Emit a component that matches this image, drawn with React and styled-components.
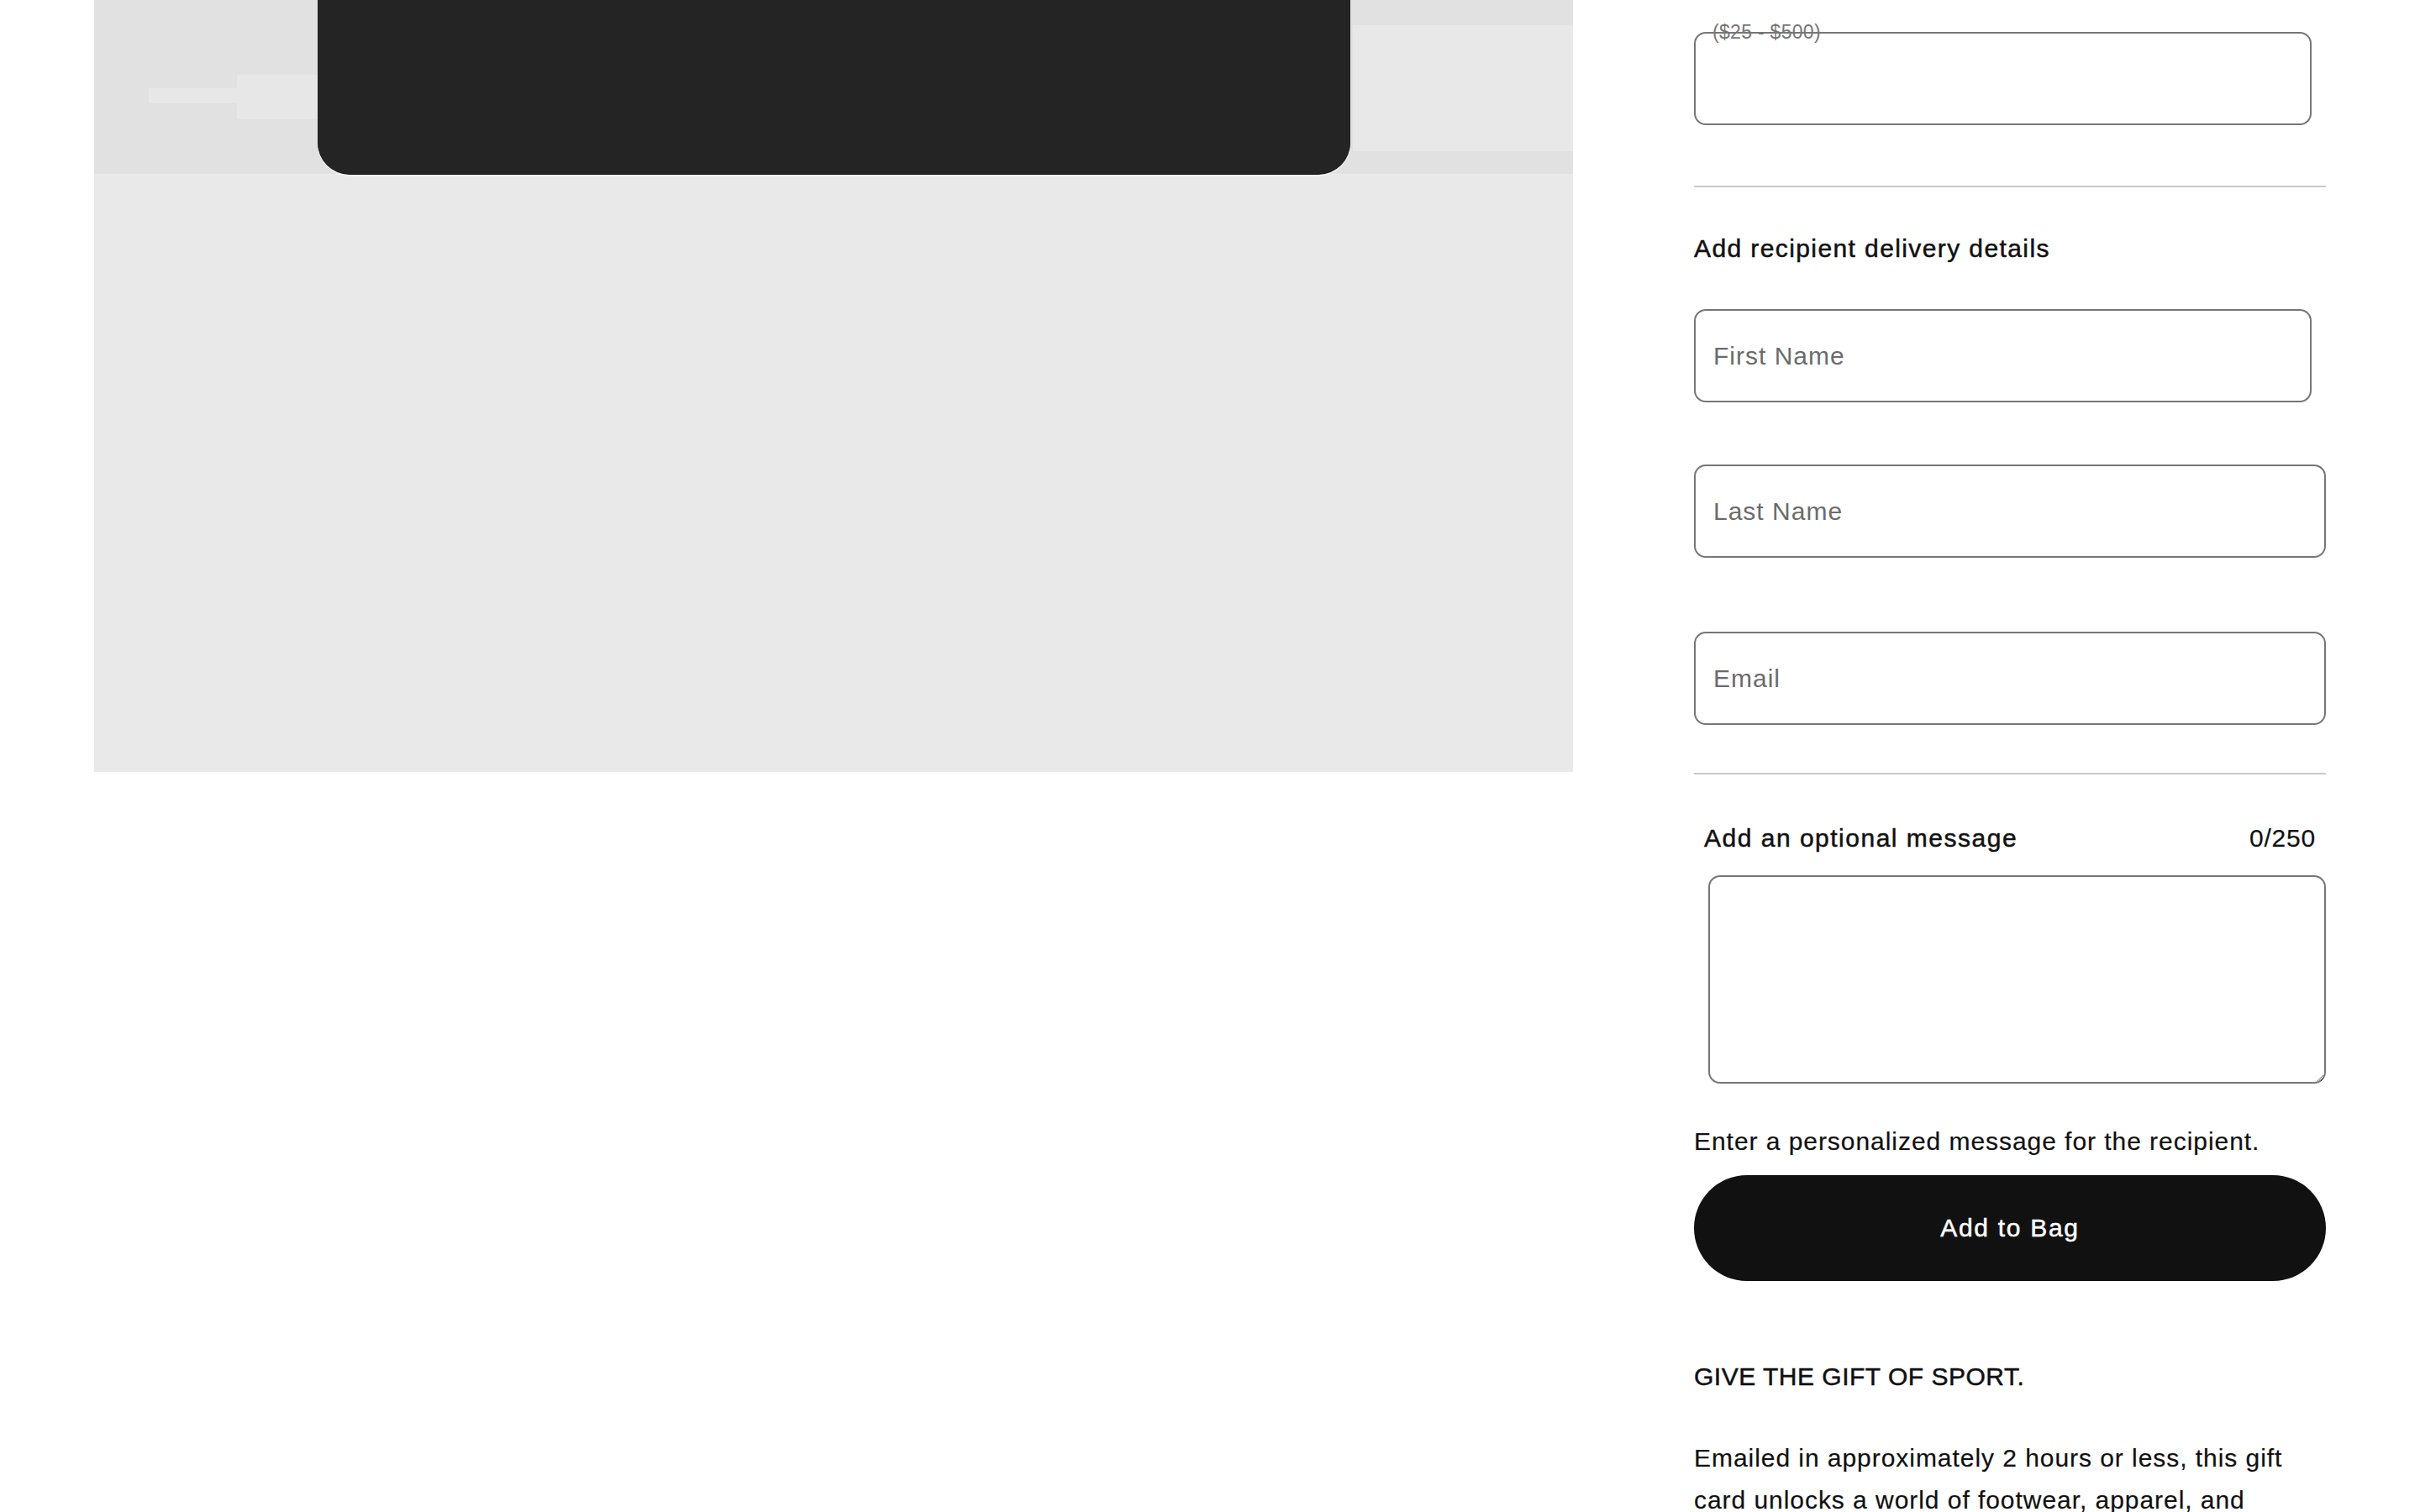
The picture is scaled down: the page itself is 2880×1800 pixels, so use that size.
import styled, { createGlobalStyle } from 'styled-components'

const GlobalStyle = createGlobalStyle`
  html, body {
    margin: 0;
    padding: 0;
    background: #fff;
  }
  body {
    font-family: 'Liberation Sans', Arial, sans-serif;
    color: #111;
  }
`

const Page = styled.div`
  display: flex;
  align-items: flex-start;
  gap: 144px;
  padding: 0 112px;
  height: 1800px;
  overflow: hidden;
`

const Media = styled.div`
  flex-shrink: 0;
  width: 1760px;
  height: 919px;
  display: flex;
  justify-content: center;
  align-items: flex-start;
  background:
    linear-gradient(#e7e7e7, #e7e7e7) 65px 105px / 200px 18px no-repeat,
    linear-gradient(#e7e7e7, #e7e7e7) 170px 89px / 100px 53px no-repeat,
    linear-gradient(#e8e8e8, #e8e8e8) right 0 top 30px / 262px 150px no-repeat,
    linear-gradient(to bottom, #e1e1e1 0, #e1e1e1 207px, #e9e9e9 207px, #e9e9e9 100%);
`

const GiftCard = styled.div`
  width: 1229px;
  height: 207px;
  background: #242424;
  border-radius: 0 0 38px 38px;
  box-shadow: 0 1px 0 #141414, 0 3px 0 #f1f1f1;
`

const Form = styled.div`
  flex-shrink: 0;
  width: 752px;
  display: flex;
  flex-direction: column;
  padding-top: 38px;
`

const Field = styled.div`
  position: relative;
  width: ${p => p.$w}px;
  margin-top: ${p => p.$mt || 0}px;
`

const Input = styled.input`
  box-sizing: border-box;
  display: block;
  width: 100%;
  height: 111px;
  margin: 0;
  padding: 0 21px;
  border: 2px solid #767676;
  border-radius: 14px;
  background: transparent;
  font: 30px 'Liberation Sans', Arial, sans-serif;
  letter-spacing: 1px;
  color: #111;
  outline: none;

  &::placeholder {
    color: #6b6b6d;
  }
`

const FloatLabel = styled.span`
  position: absolute;
  left: 22px;
  top: -12px;
  font-size: 23px;
  line-height: 24px;
  letter-spacing: 0.3px;
  color: #767676;
  pointer-events: none;
`

const Divider = styled.hr`
  width: 100%;
  height: 2px;
  margin: ${p => p.$mt}px 0 0;
  border: 0;
  background: #cacacb;
`

const Heading = styled.h3`
  margin: ${p => p.$mt}px 0 0;
  font-size: 30px;
  line-height: 36px;
  font-weight: 400;
  letter-spacing: ${p => p.$ls ?? 1.4}px;
  -webkit-text-stroke: 0.5px currentColor;
  color: #111;
`

const MessageHead = styled.div`
  display: flex;
  justify-content: space-between;
  align-items: baseline;
  margin-top: 58px;
  padding: 0 12px 0 12px;
`

const Counter = styled.span`
  font-size: 30px;
  line-height: 36px;
  letter-spacing: 0.8px;
  color: #111;
  -webkit-text-stroke: 0.2px currentColor;
`

const TextArea = styled.textarea`
  box-sizing: border-box;
  display: block;
  width: 735px;
  height: 248px;
  margin: 26px 0 0 17px;
  padding: 18px 21px;
  border: 2px solid #767676;
  border-radius: 14px;
  font: 30px 'Liberation Sans', Arial, sans-serif;
  resize: both;
  outline: none;
`

const Text = styled.p`
  margin: ${p => p.$mt}px 0 0;
  font-size: 30px;
  line-height: ${p => p.$lh || 36}px;
  letter-spacing: 0.95px;
  color: #111;
  -webkit-text-stroke: 0.2px currentColor;
`

const Button = styled.button`
  width: 100%;
  height: 126px;
  margin-top: 22px;
  border: 0;
  border-radius: 63px;
  background: #111;
  color: #fff;
  font: 30px 'Liberation Sans', Arial, sans-serif;
  letter-spacing: 1.7px;
  -webkit-text-stroke: 0.5px currentColor;
  cursor: pointer;
`

export default function App() {
  return (
    <>
      <GlobalStyle />
      <Page>
        <Media>
          <GiftCard />
        </Media>
        <Form>
          <Field $w={735}>
            <Input type="text" aria-label="Amount" />
            <FloatLabel>($25 - $500)</FloatLabel>
          </Field>
          <Divider $mt={72} />
          <Heading $mt={55}>Add recipient delivery details</Heading>
          <Field $w={735} $mt={54}>
            <Input type="text" placeholder="First Name" />
          </Field>
          <Field $w={752} $mt={74}>
            <Input type="text" placeholder="Last Name" />
          </Field>
          <Field $w={752} $mt={88}>
            <Input type="email" placeholder="Email" />
          </Field>
          <Divider $mt={57} />
          <MessageHead>
            <Heading $mt={0} $ls={1.5}>Add an optional message</Heading>
            <Counter>0/250</Counter>
          </MessageHead>
          <TextArea />
          <Text $mt={51}>Enter a personalized message for the recipient.</Text>
          <Button>Add to Bag</Button>
          <Heading $mt={96} $ls={0.5}>GIVE THE GIFT OF SPORT.</Heading>
          <Text $mt={54} $lh={50}>
            Emailed in approximately 2 hours or less, this gift card unlocks a world of
            footwear, apparel, and accessories for every athlete in your life.
          </Text>
        </Form>
      </Page>
    </>
  )
}
